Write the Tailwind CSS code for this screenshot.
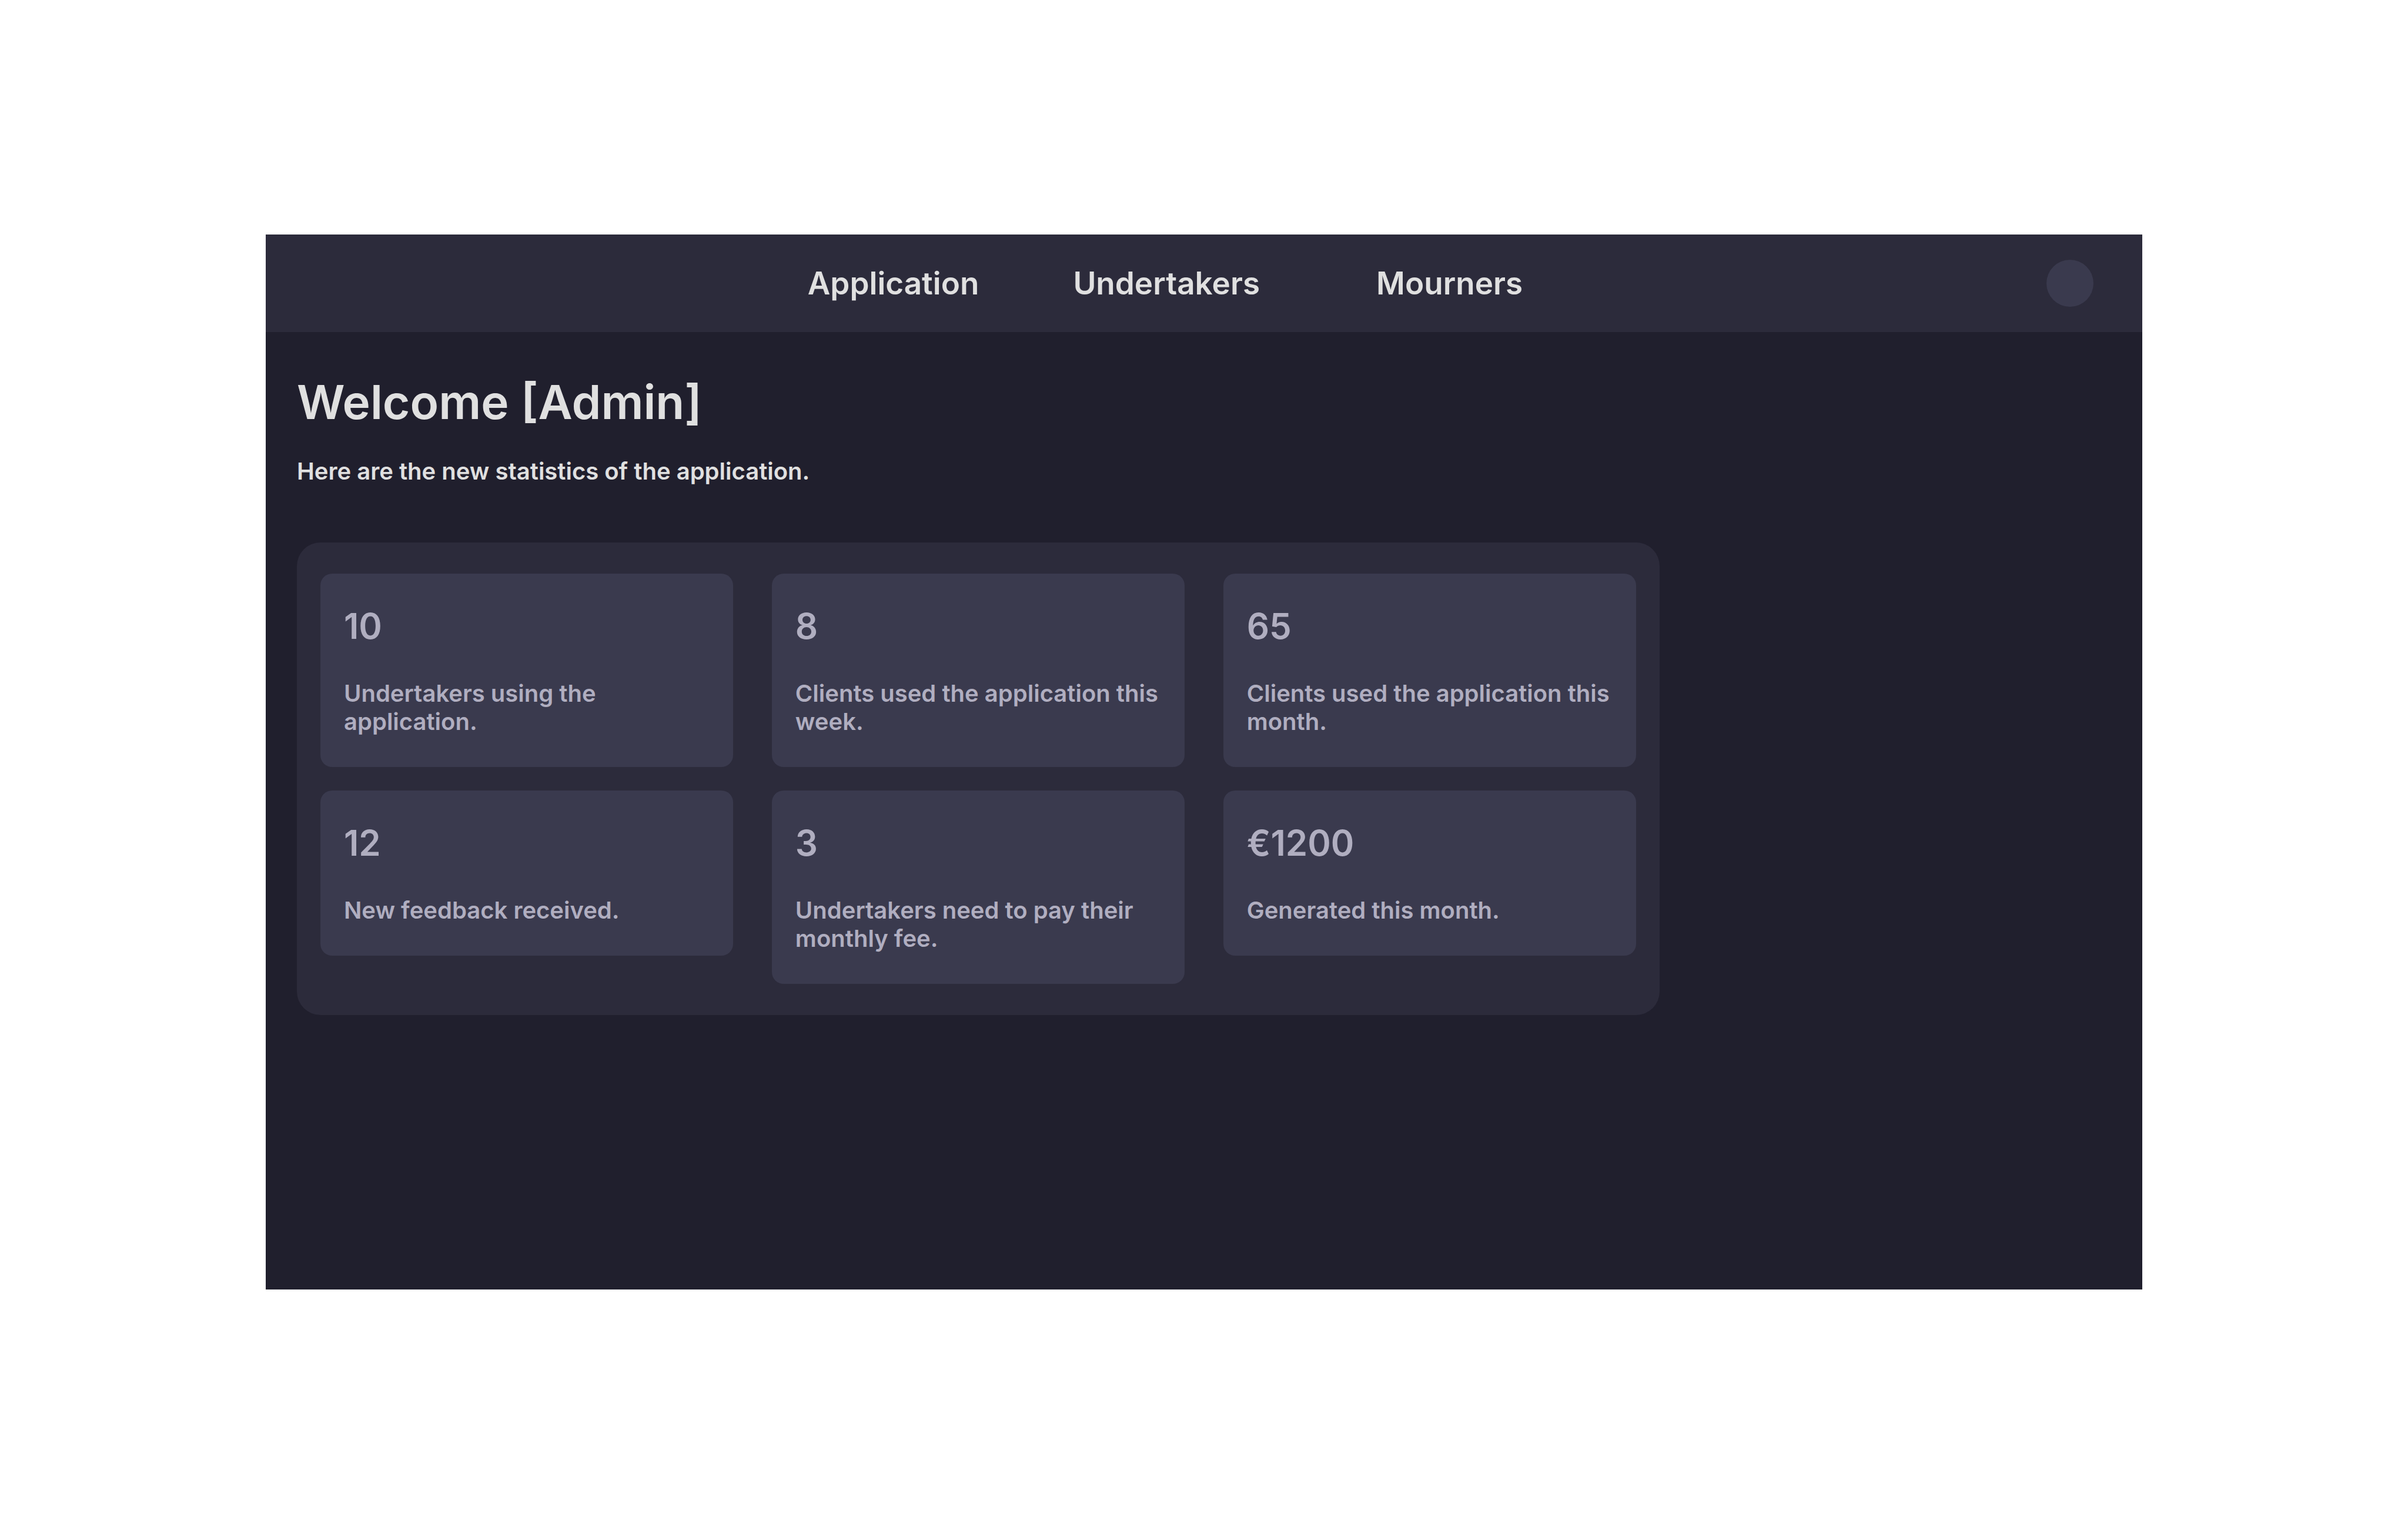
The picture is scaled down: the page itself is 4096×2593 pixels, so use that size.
<!DOCTYPE html>
<html lang="en">
<head>
<meta charset="utf-8">
<title>Admin dashboard</title>
<script src="https://cdn.jsdelivr.net/npm/@tailwindcss/browser@4"></script>
</head>
<body class="flex min-h-screen bg-white px-[452px] py-[399px] font-['Inter',sans-serif] font-semibold">
  <div class="flex flex-1 flex-col bg-[#201f2d] text-[#e0e0e0]">
    <header class="flex h-[166px] items-center justify-between bg-[#2c2b3b] pr-[83px]">
      <nav class="ml-[29.65%] flex items-center text-[53px] leading-[64px]">
        <a href="#application">Application</a>
        <a href="#undertakers" class="ml-[160px]">Undertakers</a>
        <a href="#mourners" class="ml-[198px]">Mourners</a>
      </nav>
      <button type="button" aria-label="Account" class="size-20 rounded-full bg-[#3a3a4e]"></button>
    </header>
    <main class="px-[53px] pt-[70px]">
      <h1 class="text-[80px] leading-[97px]">Welcome [Admin]</h1>
      <p class="mt-[46px] text-[40px] leading-[48px]">Here are the new statistics of the application.</p>
      <section aria-label="Statistics" class="mt-[97px] grid w-[75.1%] grid-cols-3 items-start gap-x-[66px] gap-y-10 rounded-[40px] bg-[#2c2b3b] px-10 py-[53px] text-[40px] leading-[48px] text-[#b0aec0]">
        <article class="rounded-[20px] bg-[#3a3a4e] px-10 py-[53px]">
          <h2 class="text-[60px] leading-[73px]">10</h2>
          <p class="mt-[54px]">Undertakers using the application.</p>
        </article>
        <article class="rounded-[20px] bg-[#3a3a4e] px-10 py-[53px]">
          <h2 class="text-[60px] leading-[73px]">8</h2>
          <p class="mt-[54px]">Clients used the application this week.</p>
        </article>
        <article class="rounded-[20px] bg-[#3a3a4e] px-10 py-[53px]">
          <h2 class="text-[60px] leading-[73px]">65</h2>
          <p class="mt-[54px]">Clients used the application this month.</p>
        </article>
        <article class="rounded-[20px] bg-[#3a3a4e] px-10 py-[53px]">
          <h2 class="text-[60px] leading-[73px]">12</h2>
          <p class="mt-[54px]">New feedback received.</p>
        </article>
        <article class="rounded-[20px] bg-[#3a3a4e] px-10 py-[53px]">
          <h2 class="text-[60px] leading-[73px]">3</h2>
          <p class="mt-[54px]">Undertakers need to pay their monthly fee.</p>
        </article>
        <article class="rounded-[20px] bg-[#3a3a4e] px-10 py-[53px]">
          <h2 class="text-[60px] leading-[73px]">€1200</h2>
          <p class="mt-[54px]">Generated this month.</p>
        </article>
      </section>
    </main>
  </div>
</body>
</html>
